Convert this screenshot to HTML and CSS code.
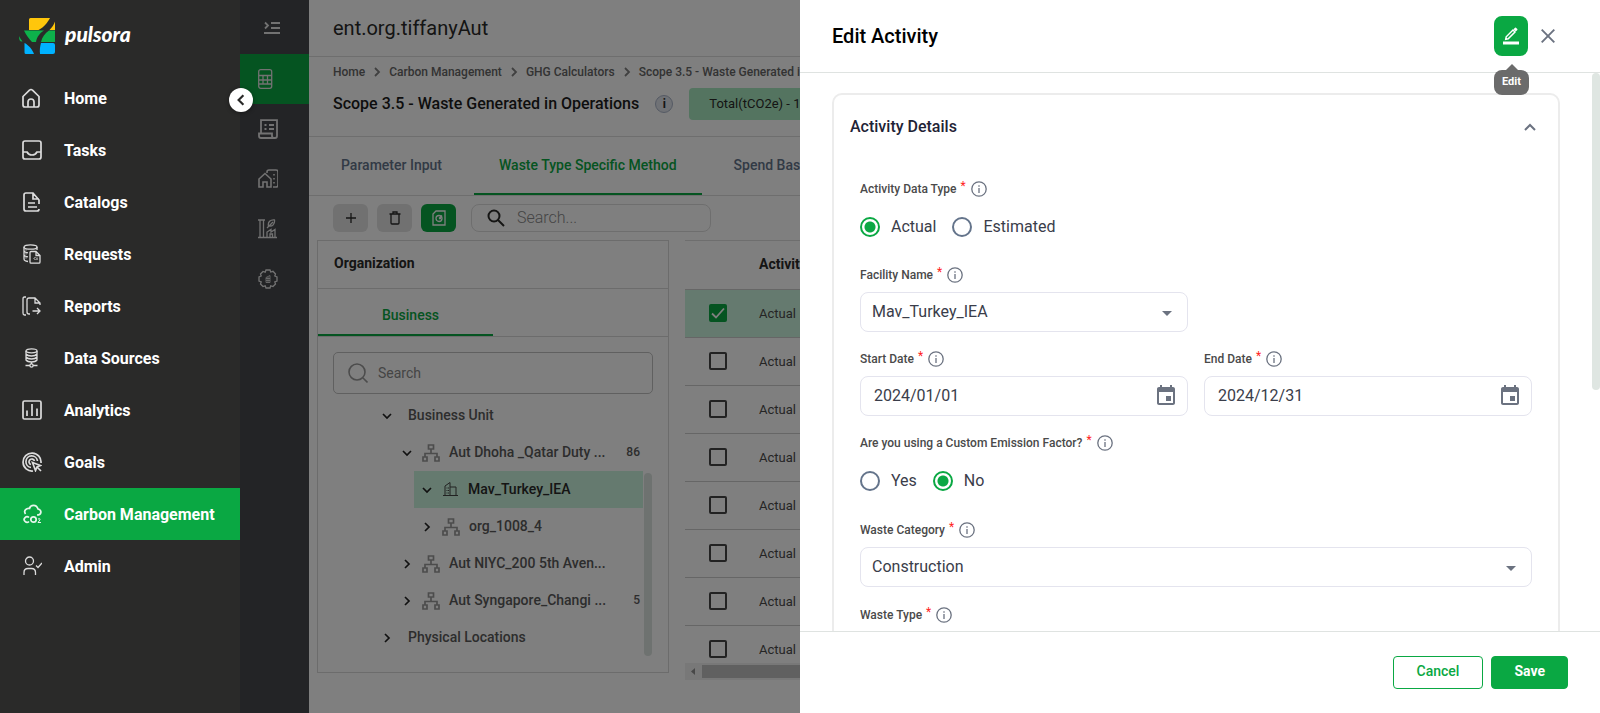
FILE: index.html
```html
<!DOCTYPE html>
<html lang="en">
<head>
<meta charset="utf-8">
<title>Edit Activity - Pulsora</title>
<link rel="stylesheet" href="styles.css">
</head>
<body>
<svg class="sprite" aria-hidden="true">
  <symbol id="org" viewBox="0 0 18 18"><path d="M6.500 1h5v4h-5zM1 13h4v4H1zM13 13h4v4h-4zM9 5v4M3 13V9.500h12V13" /></symbol>
  <symbol id="chev" viewBox="0 0 10 10"><path d="M3 1l4 4-4 4"/></symbol>
  <symbol id="info" viewBox="0 0 16 16"><circle cx="8" cy="8" r="7.200"/><path d="M8 7v5M8 4.200v1.600"/></symbol>
  <symbol id="event" viewBox="0 0 24 24"><path d="M17 12h-5v5h5v-5zM16 1v2H8V1H6v2H5c-1.110 0-1.990.9-1.990 2L3 19c0 1.100.89 2 2 2h14c1.100 0 2-.9 2-2V5c0-1.100-.9-2-2-2h-1V1h-2zm3 18H5V8h14v11z"/></symbol>
</svg>
<div class="app">
  <nav class="sidebar" aria-label="Main">
    <a class="brand" href="#">
      <svg width="36" height="36" viewBox="0 0 36 36" aria-hidden="true">
        <path fill="#ffc60b" d="M11.500 0H31C28.500 4.500 25.500 9 19.500 12H10V1.500Q10 0 11.500 0zM36 3.500V12h-5.500C33 9.500 35 6.500 36 3.500z"/>
        <path fill="#0db14b" d="M5 12.500h20c-4 2.500-7 6-8 11.500h-4C10 21 7 17 5 12.500zM30 12.500h6V24H22c1-5 4-8.500 8-11.500zM0 18c1 2 2 3.500 3.500 5.500C1 24 0 22 0 18z"/>
        <path fill="#00b2ff" d="M5.500 25c4 2 8 6.500 9.500 11H7q-1.500 0-1.500-1.500zM22 25h12q2 0 2 2v7q0 2-2 2H21c-.5-4 0-7 1-11z"/>
      </svg>
      <span>pulsora</span>
    </a>
    <ul class="menu">
      <li><a href="#"><svg viewBox="0 0 20 20"><path d="M1 8.500L7.500 2.200a2 2 0 0 1 3 0L17 8.500V17a2 2 0 0 1-2 2H3a2 2 0 0 1-2-2zM6 19v-5a3 3 0 0 1 6 0v5"/></svg>Home</a></li>
      <li><a href="#"><svg viewBox="0 0 20 20"><rect x="1" y="1" width="18" height="18" rx="2"/><path d="M1 12h4c1 2 2.500 3 5 3s4-1 5-3h4"/></svg>Tasks</a></li>
      <li><a href="#"><svg viewBox="0 0 20 20"><path d="M17 12V8l-6-7H4a2 2 0 0 0-2 2v14a2 2 0 0 0 2 2h11q2 0 2-2M11 1v6h6M6 11h7M6 15h9"/></svg>Catalogs</a></li>
      <li><a href="#"><svg class="thin" viewBox="0 0 20 20"><ellipse cx="8.500" cy="3" rx="6.500" ry="2.200"/><path d="M2 3v12q0 2 4 2.500M15 3v3M2 7q1 1.500 4 1.800M2 11q1 1.500 4 1.800M3.500 5.800h1M3.500 9.800h1M3.500 13.800h1M8 8.500q0-1 1-1h5l4 4V18q0 1.200-1 1.200H9q-1 0-1-1.200zM14 7.500v4h4"/><path class="fine" d="M13.500 13l-1.500 1.500 1.500 1.500M15 13.500v2.500"/></svg>Requests</a></li>
      <li><a href="#"><svg class="thin" viewBox="0 0 20 20"><path d="M4 1H2.500Q1 1 1 3v14q0 2 1.500 2H4M8 18H7q-2 0-2-2V4q0-2 2-2h6l5 5v2M13 2v5h5M10.500 15H18M15 12l3 3-3 3"/></svg>Reports</a></li>
      <li><a href="#"><svg class="thin" viewBox="0 0 20 20"><ellipse cx="9.500" cy="2.800" rx="5.500" ry="2"/><path d="M4 3v9q1.500 2 5.500 2t5.500-2V3M4 6q1.500 2 5.500 2T15 6M4 9q1.500 2 5.500 2T15 9M9.500 14v2M3.500 17.500H8M11 17.500h4.500"/><circle cx="9.500" cy="17.500" r="1.600"/></svg>Data Sources</a></li>
      <li><a href="#"><svg viewBox="0 0 20 20"><rect x="1" y="1" width="18" height="18" rx="1.500"/><path d="M5 10.500V16M10 4v12M15 8.500V16"/></svg>Analytics</a></li>
      <li><a href="#"><svg viewBox="0 0 20 20"><path d="M19 11A9 9 0 1 0 11 19M15.500 9A5.800 5.800 0 1 0 9 15.500M12.500 9A2.800 2.800 0 1 0 9 12.500M10.500 10.500l8 3-3.500 1.500-1.500 3.500zM15 15l4 4"/></svg>Goals</a></li>
      <li><a class="on" href="#" aria-current="page"><svg viewBox="0 0 20 20"><path d="M3.500 10C1 6.500 5 3.800 7.500 4.500 8.500 .5 14.500 0 16 5c4 1 4 6-1 6M7 13.500a2.800 2.800 0 1 0 0 4"/><circle cx="11.500" cy="15.500" r="2.700"/><path class="fine" d="M16 15q2.500-1 2 .8L16 18.500h3"/></svg>Carbon Management</a></li>
      <li><a href="#"><svg class="thin" viewBox="0 0 20 20"><circle cx="7.500" cy="5" r="4"/><path d="M2 19v-2.500q0-4 4-4h3.500q4 0 4 4V19M14 9.500l2 2 4-4.500"/></svg>Admin</a></li>
    </ul>
    <button class="collapse" type="button" aria-label="Collapse menu"><svg width="12" height="12" viewBox="0 0 10 10"><path d="M7 1L3 5l4 4"/></svg></button>
  </nav>

  <nav class="rail" aria-label="Carbon Management">
    <button class="rail-top" type="button" aria-label="Expand"><svg width="16" height="14" viewBox="0 0 16 14"><path d="M1 1.500L4 4.500 1 7.500" stroke-width="1.800"/><path d="M7 2h9M7 7h9M0 12h16" stroke-width="2.200"/></svg></button>
    <a class="on" href="#" aria-label="Calculators"><svg viewBox="0 0 20 20"><rect x=".7" y=".7" width="13" height="18.600" rx="2"/><path d="M1 6.500h13M1 11h13M1 15h13M5 6.500V15M9.500 6.500V15"/></svg></a>
    <a href="#" aria-label="Ledger"><svg viewBox="0 0 20 20"><path d="M3 14V1.200h16V17q0 2-2 2H3q-2 0-2-2v-2.500h13V17q0 2 2 2M6.500 6h2M6.500 10h2M11 6h5M11 10h5" stroke-width="1.800"/></svg></a>
    <a href="#" aria-label="Facilities"><svg viewBox="0 0 20 20"><path d="M1 18v-8l6-5.500 6 5.500v8H9v-5H5v5zM9 4V3q0-2 2-2h7q2 0 2 2v13q0 2-2 2h-3M16 5v1.500M16 9v1.500M16 13v1.500" stroke-width="1.600"/></svg></a>
    <a href="#" aria-label="Plants"><svg viewBox="0 0 20 20"><path d="M0 18.500h19M2 18V1M5.500 18V1M0 1h7M9 18v-5l4-2.500V13l4-2.500V18M12 18v-3h2.500v3M9 9l6-6M10.500 7c-1-4 2-6.500 6-6 .5 4-2 7-6 6"/></svg></a>
    <a href="#" aria-label="Settings"><svg viewBox="0 0 20 20"><path d="M8 1h4l.7 2 2.300-.7L17.500 5l-.7 2 2.200 1v4l-2.200.8.700 2.200-2.500 2.500-2.300-.7L12 19H8l-.8-2.200-2.200.7L2.500 15l.7-2.200L1 12V8l2.200-1-.7-2L5 2.500l2.200.7z"/><path d="M8 13.500v-5l4-2v7zM8 9.500h4M8 11.500h4M10 8v5.500" stroke-width=".8"/></svg></a>
  </nav>

  <main class="page">
    <header class="org-bar"><h1>ent.org.tiffanyAut</h1></header>
    <section class="scope">
      <nav class="crumbs" aria-label="Breadcrumb">
        <a href="#">Home</a><svg><use href="#chev"/></svg>
        <a href="#">Carbon Management</a><svg><use href="#chev"/></svg>
        <a href="#">GHG Calculators</a><svg><use href="#chev"/></svg>
        <a href="#">Scope 3.5 - Waste Generated in Operations</a>
      </nav>
      <div class="scope-row">
        <h2>Scope 3.5 - Waste Generated in Operations</h2>
        <button class="about" type="button" aria-label="About this scope">i</button>
        <span class="total">Total(tCO2e) - 1</span>
      </div>
    </section>
    <div class="tabs" role="tablist">
      <button type="button" role="tab">Parameter Input</button>
      <button type="button" role="tab" class="on" aria-selected="true">Waste Type Specific Method</button>
      <button type="button" role="tab">Spend Based Method</button>
    </div>
    <div class="toolbar">
      <button type="button" aria-label="Add"><svg width="12" height="12" viewBox="0 0 12 12"><path d="M6 1v10M1 6h10"/></svg></button>
      <button type="button" aria-label="Delete"><svg width="12" height="14" viewBox="0 0 12 14"><path d="M.5 3h11M4 3V1h4v2M2 3v9q0 1 1 1h6q1 0 1-1V3"/></svg></button>
      <button type="button" class="go" aria-label="Report"><svg width="14" height="16" viewBox="0 0 14 16"><path d="M4 1h9v14H1V4z"/><circle cx="7" cy="8.500" r="3"/><path d="M7 8.500L10 5.500M7 8.500h2"/></svg></button>
      <label class="find"><svg width="18" height="18" viewBox="0 0 18 18"><circle cx="7" cy="7" r="5.500"/><path d="M11 11l6 6"/></svg><input type="text" placeholder="Search..." aria-label="Search activities"></label>
    </div>
    <div class="work">
      <section class="org-panel">
        <h3>Organization</h3>
        <div class="org-tabs"><button type="button">Business</button></div>
        <div class="org-body">
          <label class="org-find"><svg width="20" height="20" viewBox="0 0 20 20"><circle cx="9" cy="9" r="8"/><path d="M15 15l4.500 4.500"/></svg><input type="text" placeholder="Search" aria-label="Search organization"></label>
          <div class="tree-wrap">
            <ul class="tree">
              <li class="l0 open"><svg class="chev"><use href="#chev"/></svg><span>Business Unit</span></li>
              <li class="l1 open"><svg class="chev"><use href="#chev"/></svg><svg class="node"><use href="#org"/></svg><span>Aut Dhoha _Qatar Duty ...</span><b>86</b></li>
              <li class="l2 open picked"><svg class="chev"><use href="#chev"/></svg><svg class="node bld" viewBox="0 0 18 18"><path d="M1 14.500h15M3 14V5l5-3.500V14M8 6h6v8M5 6.500v1M5 9v1M5 11.500v1M6.500 6.500v1M6.500 9v1M6.500 11.500v1"/></svg><span>Mav_Turkey_IEA</span></li>
              <li class="l2"><svg class="chev"><use href="#chev"/></svg><svg class="node"><use href="#org"/></svg><span>org_1008_4</span></li>
              <li class="l1"><svg class="chev"><use href="#chev"/></svg><svg class="node"><use href="#org"/></svg><span>Aut NIYC_200 5th Aven...</span></li>
              <li class="l1"><svg class="chev"><use href="#chev"/></svg><svg class="node"><use href="#org"/></svg><span>Aut Syngapore_Changi ...</span><b>5</b></li>
              <li class="l0"><svg class="chev"><use href="#chev"/></svg><span>Physical Locations</span></li>
            </ul>
            <div class="tree-bar"><i></i></div>
          </div>
        </div>
      </section>
      <section class="grid">
        <div class="grid-clip">
          <table>
            <thead><tr><th class="pick"></th><th>Activity Data Type</th></tr></thead>
            <tbody>
              <tr class="picked"><td class="pick"><input type="checkbox" checked aria-label="Row 1"></td><td>Actual</td></tr>
              <tr><td class="pick"><input type="checkbox" aria-label="Row 2"></td><td>Actual</td></tr>
              <tr><td class="pick"><input type="checkbox" aria-label="Row 3"></td><td>Actual</td></tr>
              <tr><td class="pick"><input type="checkbox" aria-label="Row 4"></td><td>Actual</td></tr>
              <tr><td class="pick"><input type="checkbox" aria-label="Row 5"></td><td>Actual</td></tr>
              <tr><td class="pick"><input type="checkbox" aria-label="Row 6"></td><td>Actual</td></tr>
              <tr><td class="pick"><input type="checkbox" aria-label="Row 7"></td><td>Actual</td></tr>
              <tr><td class="pick"><input type="checkbox" aria-label="Row 8"></td><td>Actual</td></tr>
            </tbody>
          </table>
        </div>
        <div class="hbar"><svg width="17" height="17" viewBox="0 0 17 17"><path d="M10 5v7L6 8.500z"/></svg><i></i></div>
      </section>
    </div>
  </main>
</div>
<div class="backdrop"></div>

<aside class="drawer" role="dialog" aria-labelledby="drawer-title">
  <header class="drawer-head">
    <h2 id="drawer-title">Edit Activity</h2>
    <div class="edit-wrap">
      <button class="edit" type="button" aria-label="Edit"><svg width="16" height="18" viewBox="0 0 16 18"><path d="M0 14.500h16v3H0z" fill="#fff"/><path d="M2.700 12.300l.5-2.500L10 3l2 2-6.800 6.800z" fill="none" stroke="#fff" stroke-width="1.500"/><path d="M10.500 2.300L12 .8q.5-.4 1 0l1.300 1.300q.4.500 0 1L12.800 4.600z" fill="#fff"/></svg></button>
      <span class="tip" role="tooltip">Edit</span>
    </div>
    <button class="close" type="button" aria-label="Close"><svg width="14" height="14" viewBox="0 0 14 14"><path d="M.7.7l12.600 12.600M13.300.7L.7 13.300"/></svg></button>
  </header>
  <div class="drawer-body">
    <div class="card-area">
      <section class="card">
        <header class="card-head"><h3>Activity Details</h3><button type="button" aria-label="Collapse section"><svg width="12" height="8" viewBox="0 0 12 8"><path d="M1 7l5-5 5 5"/></svg></button></header>
        <form class="form">
          <fieldset class="wide radios">
            <legend>Activity Data Type<em>*</em><svg><use href="#info"/></svg></legend>
            <div><label><input type="radio" name="kind" checked>Actual</label><label><input type="radio" name="kind">Estimated</label></div>
          </fieldset>
          <div class="field first">
            <label for="facility">Facility Name<em>*</em><svg><use href="#info"/></svg></label>
            <div class="box"><select id="facility"><option>Mav_Turkey_IEA</option></select><svg class="drop" viewBox="0 0 10 5"><path d="M0 0h10L5 5z"/></svg></div>
          </div>
          <div class="field">
            <label for="start">Start Date<em>*</em><svg><use href="#info"/></svg></label>
            <div class="box date"><input id="start" type="text" value="2024/01/01"><svg class="cal"><use href="#event"/></svg></div>
          </div>
          <div class="field">
            <label for="end">End Date<em>*</em><svg><use href="#info"/></svg></label>
            <div class="box date"><input id="end" type="text" value="2024/12/31"><svg class="cal"><use href="#event"/></svg></div>
          </div>
          <fieldset class="wide radios roomy">
            <legend>Are you using a Custom Emission Factor?<em>*</em><svg><use href="#info"/></svg></legend>
            <div><label><input type="radio" name="custom">Yes</label><label><input type="radio" name="custom" checked>No</label></div>
          </fieldset>
          <div class="field wide">
            <label for="category">Waste Category<em>*</em><svg><use href="#info"/></svg></label>
            <div class="box"><select id="category"><option>Construction</option></select><svg class="drop" viewBox="0 0 10 5"><path d="M0 0h10L5 5z"/></svg></div>
          </div>
          <div class="field wide">
            <label for="type">Waste Type<em>*</em><svg><use href="#info"/></svg></label>
            <div class="box"><select id="type"></select></div>
          </div>
        </form>
      </section>
    </div>
    <div class="vbar"><i></i></div>
  </div>
  <footer class="drawer-foot"><button class="cancel" type="button">Cancel</button><button class="save" type="button">Save</button></footer>
</aside>
</body>
</html>
```
FILE: styles.css
```css
* { box-sizing: border-box; }
html, body { height: 100%; margin: 0; overflow: hidden; }
body { font-family: Roboto, "Liberation Sans", sans-serif; font-size: 14px; color: #2a2a29; background: #fff; }
h1, h2, h3, ul, fieldset, legend { margin: 0; padding: 0; border: 0; }
ul { list-style: none; }
a { color: inherit; text-decoration: none; }
button, input, select { font: inherit; color: inherit; margin: 0; padding: 0; border: 0; background: none; outline: 0; }
svg { display: block; flex: none; fill: none; stroke: currentColor; }
.sprite { position: absolute; width: 0; height: 0; }
.app { display: flex; height: 100vh; }

.sidebar { position: relative; z-index: 3; flex: none; width: 240px; background: #2a2a29; color: #fff; }
.brand { display: flex; align-items: center; gap: 10px; height: 72px; padding: 0 19px; }
.brand svg { stroke: none; }
.brand span { padding-bottom: 5px; font: italic 900 21px/24px Lato, sans-serif; }
.menu a { display: flex; align-items: center; gap: 22px; height: 52px; padding-left: 22px; font-size: 16px; font-weight: 700; }
.menu li:first-child { padding-top: 0; }
.menu svg { width: 20px; height: 20px; stroke: #dcdcdc; stroke-width: 1.7; }
.menu .thin { stroke-width: 1.3; }
.menu .fine { stroke-width: 1; }
.menu .on { background: #0aa843; }
.menu .on svg { stroke: #e6f6ec; }
.collapse { position: absolute; right: -13px; top: 88px; display: grid; place-items: center; width: 24px; height: 24px; border-radius: 50%; background: #fff; color: #2a2a29; box-shadow: 0 1px 4px rgba(0, 0, 0, .4); }
.collapse svg { stroke-width: 1.8; }

.rail { flex: none; width: 69px; background: #46484c; color: #e4e4e4; }
.rail-top { display: grid; place-items: center; width: 64px; height: 54px; padding-top: 2px; }
.rail a { display: flex; align-items: center; height: 50px; padding-left: 18px; }
.rail a svg { width: 20px; height: 20px; stroke-width: 1.3; }
.rail .on { background: #0aa843; }

.page { flex: 1; min-width: 0; display: flex; flex-direction: column; overflow: hidden; }
.org-bar { display: flex; align-items: center; height: 57px; padding-left: 24px; border-bottom: 1px solid #ddd; }
.org-bar h1 { font-size: 20px; font-weight: 400; }
.scope { height: 80px; padding: 7px 0 0 24px; border-bottom: 1px solid #ddd; }
.crumbs { display: flex; align-items: center; height: 16px; gap: 7px; white-space: nowrap; font-size: 12px; font-weight: 500; color: #666; }
.crumbs svg { width: 10px; height: 12px; stroke-width: 1.8; color: #808080; }
.scope-row { display: flex; align-items: center; gap: 16px; height: 32px; margin-top: 8px; white-space: nowrap; }
.scope-row h2 { padding-bottom: 2px; font-size: 16px; font-weight: 500; color: #1c1c1c; }
.about { width: 18px; height: 18px; border: 1px solid #aab4c8; border-radius: 50%; background: #e0e4ec; font-size: 12px; line-height: 16px; font-weight: 700; }
.total { flex: 1; height: 32px; padding-left: 20px; border-radius: 4px; background: #a8e8c0; font-size: 13px; line-height: 31px; }
.tabs { display: flex; gap: 8px; height: 59px; padding-left: 8px; border-bottom: 1px solid #ddd; }
.tabs button { padding: 0 24px 1px; border-bottom: 2px solid transparent; white-space: nowrap; font-weight: 500; color: #64748b; }
.tabs .on { padding: 0 25px 1px; border-color: #0aa843; color: #0aa843; }
.toolbar { display: flex; gap: 9px; height: 44px; padding: 8px 0 8px 24px; }
.toolbar button { display: grid; place-items: center; width: 35px; border-radius: 6px; background: #e2e2e2; }
.toolbar button svg { stroke-width: 1.3; }
.toolbar .go { background: #0aa843; color: #fff; }
.find { display: flex; align-items: center; gap: 12px; width: 240px; margin-left: 6px; padding-left: 15px; border: 1px solid #ddd; border-radius: 8px; }
.find svg { stroke-width: 2; }
.find input { width: 150px; padding-bottom: 2px; font-size: 16px; font-weight: 300; }
input::placeholder { color: #8a8a8a; opacity: 1; }
.work { display: flex; flex: 1; gap: 16px; min-height: 0; padding: 0 0 33px 8px; }
.org-panel { display: flex; flex-direction: column; width: 352px; margin-bottom: 7px; border: 1px solid #d8d8d8; }
.org-panel h3 { height: 48px; padding-left: 16px; border-bottom: 1px solid #d8d8d8; font-size: 14px; line-height: 44px; font-weight: 700; }
.org-tabs { display: flex; height: 48px; border-bottom: 1px solid #d8d8d8; }
.org-tabs button { width: 175px; padding: 6px 0 0 10px; border-bottom: 2px solid #0aa843; font-weight: 500; color: #0aa843; }
.org-body { padding: 15px 15px 0; }
.org-find { display: flex; align-items: center; gap: 10px; height: 42px; padding-left: 14px; border: 1px solid #c0c0c0; border-radius: 5px; color: #999; }
.org-find svg { stroke-width: 1.6; }
.org-find input { width: 240px; font-weight: 400; }
.tree-wrap { display: flex; margin-top: 3px; }
.tree { flex: 1; font-weight: 500; color: #5a5a5a; }
.tree li { display: flex; align-items: center; height: 37px; padding-right: 3px; }
.tree span, .tree b { padding-bottom: 2px; }
.tree .l0 { padding-left: 49px; }
.tree .l1 { padding-left: 69px; }
.tree .l2 { margin-left: 81px; padding-left: 8px; }
.tree .chev { width: 10px; height: 10px; stroke-width: 1.7; color: #222; }
.tree .open .chev { transform: rotate(90deg); }
.tree .node { width: 18px; height: 18px; margin: 0 9px 0 10px; stroke-width: 1.7; color: #999; }
.tree .bld { margin-right: 8px; stroke-width: 1; color: #444; }
.tree .l0 span { margin-left: 16px; }
.tree b { margin-left: auto; font-size: 12px; font-weight: 500; }
.tree .picked { background: #caf4de; color: #2a2a29; }
.tree-bar { width: 10px; padding: 76px 1px 0; }
.tree-bar i { display: block; height: 183px; border-radius: 4px; background: #dde4e0; }
.grid { flex: 1; min-width: 0; display: flex; flex-direction: column; border-top: 1px solid #ddd; }
.grid-clip { flex: 1; min-height: 0; overflow: hidden; }
.grid table { width: 100%; border-collapse: collapse; font-size: 13px; }
.grid tr { height: 48px; border-bottom: 1px solid #ccc; }
.grid th { padding: 0 0 2px; text-align: left; font-size: 14px; font-weight: 700; }
.grid td { padding: 0; color: #4a4a4a; }
.grid .pick { width: 74px; padding-left: 24px; }
.grid .picked { background: #caf4de; }
.grid input { display: block; appearance: none; width: 18px; height: 18px; border: 2px solid #444; border-radius: 2px; }
.grid input:checked { border-color: #0aa843; background: #0aa843 url("data:image/svg+xml,%3Csvg xmlns='http://www.w3.org/2000/svg' viewBox='0 0 14 14'%3E%3Cpath d='M1 7.500l4 4 8-9' fill='none' stroke='white' stroke-width='1.800'/%3E%3C/svg%3E"); }
.hbar { display: flex; height: 17px; background: #f1f1f1; }
.hbar svg { stroke: none; fill: #909090; }
.hbar i { flex: 1; margin: 2px 0; background: #c1c1c1; }

.backdrop { position: fixed; inset: 0; z-index: 2; background: rgba(0, 0, 0, .5); }

.drawer { position: fixed; inset: 0 0 0 auto; z-index: 4; display: flex; flex-direction: column; width: 50%; background: #fff; }
.drawer-head { display: flex; align-items: center; flex: none; height: 73px; padding: 0 45px 0 32px; border-bottom: 1px solid #dfe3e1; }
.drawer-head h2 { flex: 1; font-size: 20px; font-weight: 500; color: #000; }
.edit-wrap { position: relative; margin-right: 13px; }
.edit { display: grid; place-items: center; width: 34px; height: 40px; border-radius: 8px; background: #0aa843; }
.edit svg { stroke: none; }
.tip { position: absolute; left: 0; top: 54px; z-index: 1; width: 35px; height: 25px; border-radius: 8px; background: #6b6b6b; color: #fff; font-size: 11px; line-height: 23px; font-weight: 700; text-align: center; }
.tip::before { content: ""; position: absolute; left: 12px; top: -6px; border: 6px solid transparent; border-top: 0; border-bottom-color: #6b6b6b; }
.close { color: #6b7280; }
.close svg { stroke-width: 1.9; }
.drawer-body { display: flex; flex: 1; min-height: 0; overflow: hidden; }
.card-area { flex: 1; padding: 20px 32px 0; }
.card { height: 720px; border: 2px solid #ececec; border-radius: 10px; }
.card-head { display: flex; justify-content: space-between; align-items: center; height: 63px; padding: 0 22px 0 16px; }
.card-head h3 { font-size: 16px; font-weight: 500; color: #1f2336; }
.card-head button { color: #6b7280; }
.card-head svg { stroke-width: 2; }
.form { display: grid; grid-template-columns: 1fr 1fr; column-gap: 16px; padding: 21px 26px 0; }
.wide, .first { grid-column: 1 / -1; }
.first { width: calc(50% - 8px); }
.field { height: 84px; }
.field.wide { height: 85px; }
.field > label, legend { display: flex; align-items: center; height: 20px; font-size: 12px; font-weight: 500; color: #4a4a4a; }
.field > label { margin-bottom: 7px; }
em { align-self: flex-start; margin: 0 5px 0 4px; font-size: 12px; line-height: 14px; font-style: normal; font-weight: 400; color: #f22; }
.field > label svg, legend svg { width: 16px; height: 16px; stroke-width: 1.3; color: #6b7280; }
.box { display: flex; align-items: center; position: relative; height: 40px; border: 1px solid #e4e4ee; border-radius: 8px; color: #3a3d4a; font-size: 16px; }
.box select { appearance: none; width: 100%; height: 100%; padding: 0 0 2px 11px; }
.box input { flex: 1; min-width: 0; height: 100%; padding: 0 0 2px 13px; }
.drop { position: absolute; right: 15px; top: 18px; width: 10px; height: 5px; stroke: none; fill: #6b7280; pointer-events: none; }
.cal { width: 24px; height: 24px; margin-right: 9px; stroke: none; fill: #6b7280; }
.radios { height: 86px; }
.radios.roomy { height: 87px; }
.radios div { display: flex; gap: 16px; padding-top: 18px; }
.radios div label { display: flex; align-items: center; gap: 11px; height: 20px; font-size: 16px; line-height: 18px; color: #3a3d4a; }
.radios input { appearance: none; width: 20px; height: 20px; border: 2px solid #64748b; border-radius: 50%; }
.radios input:checked { border-color: #0aa843; background: radial-gradient(circle, #0aa843 5px, #fff 6px); }
.vbar { width: 8px; }
.vbar i { display: block; height: 317px; border-radius: 4px; background: #dfe6e2; }
.drawer-foot { display: flex; justify-content: flex-end; align-items: center; gap: 8px; flex: none; height: 82px; padding: 0 32px; border-top: 1px solid #dfe3e1; }
.drawer-foot button { height: 33px; padding: 0 23px 3px; border: 1px solid #0aa843; border-radius: 4px; font-weight: 500; color: #0aa843; }
.drawer-foot .save { padding: 0 22px 3px; background: #0aa843; color: #fff; font-weight: 700; }
```
